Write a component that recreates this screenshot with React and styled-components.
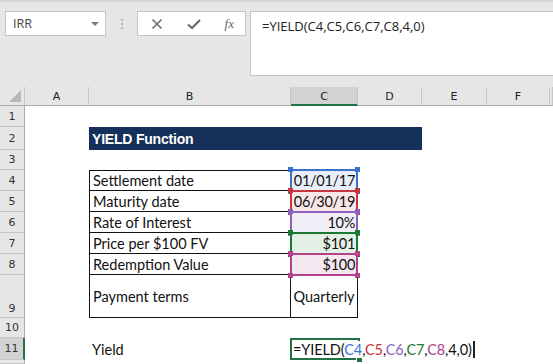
import React from 'react';
import styled, { createGlobalStyle } from 'styled-components';

const GlobalStyle = createGlobalStyle`
  html, body {
    margin: 0;
    padding: 0;
    background: #fff;
    overflow: hidden;
  }
`

const Window = styled.div`
  width: 553px;
  height: 364px;
  display: flex;
  flex-direction: column;
  background: #e6e6e6;
  font-family: 'Open Sans', 'Liberation Sans', sans-serif;
  overflow: hidden;
`

const Toolbar = styled.div`
  height: 87px;
  flex: none;
  box-sizing: border-box;
  border-top: 2px solid #d5d5d5;
  padding: 9px 0 0 5px;
  display: flex;
  align-items: flex-start;
`

const NameBox = styled.div`
  width: 101px;
  height: 25px;
  box-sizing: border-box;
  background: #fff;
  border: 1px solid #c6c6c6;
  display: flex;
  align-items: center;
  justify-content: space-between;
  padding: 0 6px 0 7px;
  font-size: 12.5px;
  color: #444;
`

const Caret = styled.span`
  width: 0;
  height: 0;
  border-left: 4px solid transparent;
  border-right: 4px solid transparent;
  border-top: 4px solid #7a7a7a;
`

const Grip = styled.div`
  width: 31px;
  height: 25px;
  display: flex;
  flex-direction: column;
  align-items: center;
  justify-content: center;
  gap: 2px;

  span {
    width: 2px;
    height: 2px;
    background: #b4b4b4;
  }
`

const FxBox = styled.div`
  width: 109px;
  height: 25px;
  box-sizing: border-box;
  background: #fff;
  border: 1px solid #c6c6c6;
  display: flex;
  align-items: center;
  justify-content: space-between;
  padding: 0 11px 0 12px;
  color: #6b6b6b;
`

const Fx = styled.span`
  font-family: 'Liberation Serif', serif;
  font-style: italic;
  font-size: 13px;
  color: #666;
`

const FormulaBar = styled.div`
  margin-left: 4px;
  flex: 1;
  height: 65px;
  box-sizing: border-box;
  background: #fff;
  border: 1px solid #c6c6c6;
  border-right: none;
  padding: 5px 0 0 11px;
  font-size: 13px;
  color: #222;
`

const Sheet = styled.div`
  flex: 1;
  display: grid;
  grid-template-columns: 25px 64px 202px 67px 64px 65px 63px 1fr;
  grid-template-rows: 19px 21px 23px 20px 21px 21px 21px 21px 21px 43px 20px 22px 1fr;
  background: #fff;
`

const Corner = styled.div`
  grid-column: 1;
  grid-row: 1;
  background: #e6e6e6;
  border-right: 1px solid #c6c6c6;
  border-bottom: 1px solid #ababab;
  position: relative;

  &::after {
    content: '';
    position: absolute;
    right: 3px;
    bottom: 3px;
    border-left: 12px solid transparent;
    border-bottom: 12px solid #b7b7b7;
  }
`

const ColHead = styled.div`
  grid-row: 1;
  grid-column: ${({ $col }) => $col};
  background: ${({ $active }) => ($active ? '#d2d2d2' : '#e6e6e6')};
  border-right: 1px solid #c6c6c6;
  border-bottom: ${({ $active }) => ($active ? '2px solid #217346' : '1px solid #ababab')};
  display: flex;
  align-items: center;
  justify-content: center;
  font-family: 'DejaVu Sans', sans-serif;
  font-size: 11px;
  color: #222;
  box-sizing: border-box;
  padding-top: 1px;
`

const RowHead = styled.div`
  grid-column: 1;
  grid-row: ${({ $row }) => $row};
  background: ${({ $active }) => ($active ? '#d2d2d2' : '#e6e6e6')};
  border-right: ${({ $active }) => ($active ? '2px solid #217346' : '1px solid #ababab')};
  border-bottom: 1px solid #c6c6c6;
  display: flex;
  align-items: ${({ $bottom }) => ($bottom ? 'flex-end' : 'center')};
  justify-content: center;
  font-family: 'DejaVu Sans', sans-serif;
  font-size: 11px;
  color: #333;
  box-sizing: border-box;
  padding-bottom: ${({ $bottom }) => ($bottom ? '2px' : '0')};
`

const Cell = styled.div`
  grid-column: ${({ $col }) => $col};
  grid-row: ${({ $row }) => $row};
  display: flex;
  align-items: center;
  justify-content: ${({ $align }) => $align || 'flex-start'};
  padding: 0 3px;
  font-family: 'Lato', 'Liberation Sans', sans-serif;
  font-size: 14.5px;
  color: #111;
  white-space: nowrap;
  min-width: 0;
`

const Title = styled(Cell)`
  background: #15305a;
  color: #fff;
  font-weight: bold;
  font-family: 'Liberation Sans', sans-serif;
  font-size: 14px;
  letter-spacing: -0.2px;
`

const TableCell = styled(Cell)`
  border: 1px solid #111;
  border-top: ${({ $first }) => ($first ? '1px solid #111' : 'none')};
  border-right: ${({ $last }) => ($last ? '1px solid #111' : 'none')};
  margin-left: ${({ $col }) => ($col === 4 ? '-1px' : '0')};
`

const Range = styled(Cell)`
  position: relative;
  background: ${({ $fill }) => $fill};
  border: 2px solid ${({ $color }) => $color};
  margin: -1px 0 -1px -1px;
  padding: 0 1px 0 0;
  letter-spacing: -0.3px;
  z-index: 1;

  &::before, &::after {
    content: '';
    position: absolute;
    width: 5px;
    height: 5px;
    background: ${({ $color }) => $color};
    top: -4px;
  }
  &::before { left: -4px; }
  &::after { right: -4px; }
`

const BottomHandles = styled.span`
  &::before, &::after {
    content: '';
    position: absolute;
    width: 5px;
    height: 5px;
    background: ${({ $color }) => $color};
    bottom: -4px;
  }
  &::before { left: -4px; }
  &::after { right: -4px; }
`

const Active = styled(Cell)`
  position: relative;
  border: 2px solid #217346;
  margin: 0 -2px 0 -1px;
  padding: 0 1px;
  overflow: visible;
  z-index: 2;

  &::after {
    content: '';
    position: absolute;
    right: -4px;
    bottom: -4px;
    width: 5px;
    height: 5px;
    background: #217346;
    border-left: 1px solid #fff;
    border-top: 1px solid #fff;
  }
`

const Formula = styled.span`
  position: relative;
  z-index: 3;
  background: #fff;
  padding-right: 1px;
  border-right: 2px solid #222;
  letter-spacing: -0.1px;
`

const Ref = styled.span`
  color: ${({ $color }) => $color};
`

const ranges = [
  { row: 5, text: '01/01/17', color: '#3b73cc', fill: '#e9eff9' },
  { row: 6, text: '06/30/19', color: '#c4373d', fill: '#f9e7e7' },
  { row: 7, text: '10%', color: '#8a63c2', fill: '#f0edf7' },
  { row: 8, text: '$101', color: '#1a7a30', fill: '#e3f0e5' },
  { row: 9, text: '$100', color: '#b2428a', fill: '#f4e7ef' },
]

const labels = ['Settlement date', 'Maturity date', 'Rate of Interest', 'Price per $100 FV', 'Redemption Value']

const cols = ['A', 'B', 'C', 'D', 'E', 'F']
const rows = ['1', '2', '3', '4', '5', '6', '7', '8', '9', '10', '11']

const App = () => {
  return (
    <>
      <GlobalStyle />
      <Window>
        <Toolbar>
          <NameBox>
            IRR
            <Caret />
          </NameBox>
          <Grip>
            <span /><span /><span />
          </Grip>
          <FxBox>
            <svg width="14" height="14" viewBox="0 0 14 14">
              <path d="M2.5 2.5 L11.5 11.5 M11.5 2.5 L2.5 11.5" stroke="#6b6b6b" strokeWidth="1.6" fill="none" />
            </svg>
            <svg width="16" height="14" viewBox="0 0 16 14">
              <path d="M2 7.5 L6 11 L14 3" stroke="#6b6b6b" strokeWidth="2.2" fill="none" />
            </svg>
            <Fx>fx</Fx>
          </FxBox>
          <FormulaBar>=YIELD(C4,C5,C6,C7,C8,4,0)</FormulaBar>
        </Toolbar>

        <Sheet>
          <Corner />
          {cols.map((c, i) => (
            <ColHead key={c} $col={i + 2} $active={c === 'C'}>{c}</ColHead>
          ))}
          <ColHead $col={8} />
          {rows.map((r, i) => (
            <RowHead key={r} $row={i + 2} $active={r === '11'} $bottom={r === '9'}>{r}</RowHead>
          ))}
          <RowHead $row={13} />

          <Title $col="3 / 6" $row={3}>YIELD Function</Title>

          {labels.map((l, i) => (
            <TableCell key={l} $col={3} $row={i + 5} $first={i === 0}>{l}</TableCell>
          ))}
          {ranges.map((r) => (
            <Range key={r.row} $col={4} $row={r.row} $color={r.color} $fill={r.fill} $align="flex-end">
              {r.text}
              <BottomHandles $color={r.color} />
            </Range>
          ))}
          <TableCell $col={3} $row={10}>Payment terms</TableCell>
          <TableCell $col={4} $row={10} $last $align="center">Quarterly</TableCell>

          <Cell $col={3} $row={12}>Yield</Cell>
          <Active $col={4} $row={12}>
            <Formula>
              =YIELD(<Ref $color="#3b73cc">C4</Ref>,<Ref $color="#c4373d">C5</Ref>,<Ref $color="#8a63c2">C6</Ref>,<Ref $color="#1a7a30">C7</Ref>,<Ref $color="#b2428a">C8</Ref>,4,0)
            </Formula>
          </Active>
        </Sheet>
      </Window>
    </>
  )
}

export default App
